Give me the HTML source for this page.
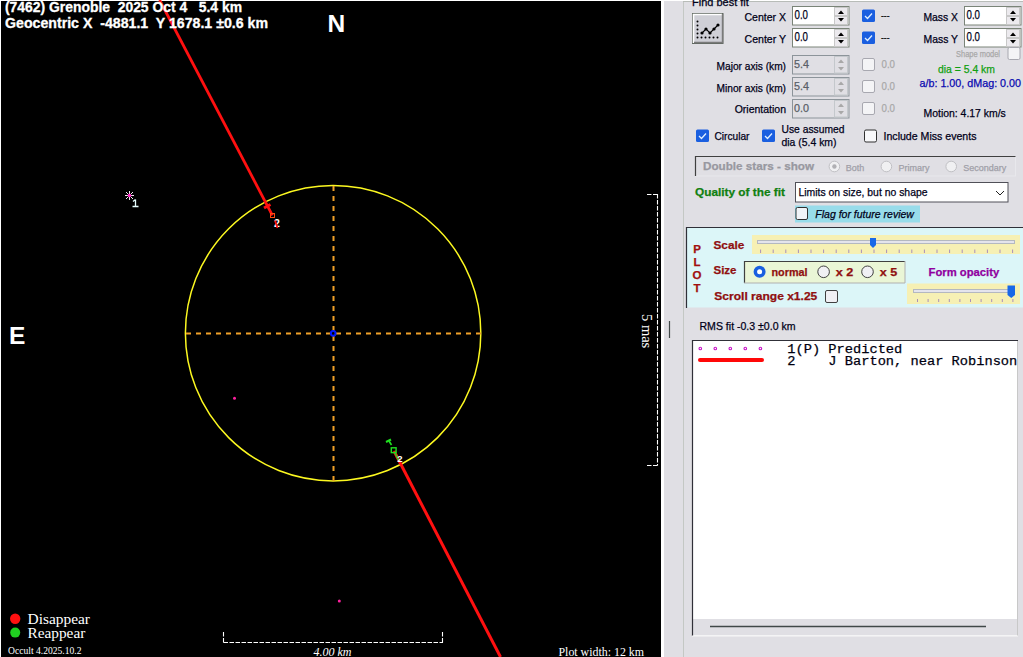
<!DOCTYPE html>
<html><head><meta charset="utf-8">
<style>
html,body{margin:0;padding:0;background:#fff;overflow:hidden}
svg{display:block}
text{font-family:"Liberation Sans",sans-serif;white-space:pre}
#panel text{stroke-width:0.25px}
text.sf,.sf text{font-family:"Liberation Serif",serif}
text.mono,.mono text{font-family:"Liberation Mono",monospace}
</style></head><body>
<svg width="1023" height="657" viewBox="0 0 1023 657">
<!-- ================= PLOT ================= -->
<rect x="0" y="0" width="1023" height="657" fill="#fff"/>
<rect x="1" y="1" width="660" height="656" fill="#000"/>
<g id="plot">
  <!-- header -->
  <text x="327.5" y="32" font-size="24.5" font-weight="bold" fill="#fff">N</text>
  <text x="9" y="344" font-size="24.5" font-weight="bold" fill="#fff">E</text>

  <!-- circle -->
  <circle cx="333.1" cy="333.2" r="147.7" fill="none" stroke="#fcf820" stroke-width="1.5"/>
  <!-- crosshair -->
  <line x1="186" y1="333.5" x2="481" y2="333.5" stroke="#f0a028" stroke-width="2" stroke-dasharray="5 5"/>
  <line x1="333.5" y1="186" x2="333.5" y2="481" stroke="#f0a028" stroke-width="2" stroke-dasharray="5 5"/>
  <circle cx="333.2" cy="333.4" r="2.3" fill="none" stroke="#0018ff" stroke-width="2"/>

  <!-- chord line -->
  <line x1="159.6" y1="0" x2="272.4" y2="215.3" stroke="#ff1010" stroke-width="2.8"/>
  <line x1="264" y1="208" x2="270.5" y2="204.5" stroke="#ff1010" stroke-width="3"/>
  <rect x="270.5" y="213.5" width="4" height="4" fill="none" stroke="#ff4a10" stroke-width="1"/>
  <text x="274" y="227" font-size="10.5" font-weight="bold" fill="#fff">2</text>
  <line x1="275" y1="220.5" x2="277.5" y2="228" stroke="#ff1010" stroke-width="1.8"/>

  <line x1="394" y1="451" x2="500.5" y2="657" stroke="#ff1010" stroke-width="3"/>
  <rect x="391.3" y="447.8" width="4.8" height="4.8" fill="none" stroke="#20e020" stroke-width="1.4"/>
  <line x1="386" y1="442" x2="391" y2="439.5" stroke="#20e020" stroke-width="2"/>
  <line x1="389" y1="441" x2="391.5" y2="445" stroke="#20e020" stroke-width="1.6"/>
  <line x1="395" y1="453" x2="399" y2="461" stroke="#20e020" stroke-width="1.5"/>
  <text x="397.3" y="461.8" font-size="9.5" font-weight="bold" fill="#fff">2</text>

  <!-- star 1 -->
  <g stroke="#f0e8f0" stroke-width="1">
    <line x1="125" y1="195.5" x2="134" y2="195.5"/>
    <line x1="129.5" y1="191" x2="129.5" y2="200"/>
    <line x1="126" y1="192" x2="133" y2="199"/>
    <line x1="133" y1="192" x2="126" y2="199"/>
  </g>
  <circle cx="129.5" cy="195.5" r="1.8" fill="#ff20c0"/>
  <path d="M135.5 199.5 V206.5 M132.5 206.5 H138.5 M133 201.5 L135.5 199.5" stroke="#e8ffff" stroke-width="1.3" fill="none"/>

  <!-- magenta dots -->
  <circle cx="234.5" cy="398.3" r="1.5" fill="#ff20a0"/>
  <circle cx="339.3" cy="601" r="1.5" fill="#ff20a0"/>

  <!-- 5 mas bar -->
  <g stroke="#fff" stroke-width="1.1" fill="none">
    <line x1="657.5" y1="194" x2="657.5" y2="465.5" stroke-dasharray="4.5 1.5"/>
    <line x1="647" y1="194.5" x2="658" y2="194.5" stroke-dasharray="4.5 1.5"/>
    <line x1="647" y1="465.5" x2="658" y2="465.5" stroke-dasharray="4.5 1.5"/>
  </g>
  <text transform="translate(641.5,314) rotate(90)" font-size="14.5" class="sf" fill="#fff">5 mas</text>

  <!-- scale bar -->
  <g stroke="#fff" stroke-width="1.1" fill="none">
    <line x1="223.5" y1="642.5" x2="443" y2="642.5" stroke-dasharray="4.5 1.5"/>
    <line x1="223.5" y1="632" x2="223.5" y2="643" stroke-dasharray="4.5 1.5"/>
    <line x1="442.5" y1="632" x2="442.5" y2="643" stroke-dasharray="4.5 1.5"/>
  </g>
  <text x="313.5" y="655.5" font-size="12" font-style="italic" class="sf" fill="#fff">4.00 km</text>
  <text x="558.5" y="655.5" font-size="12" class="sf" fill="#fff" textLength="85.5" lengthAdjust="spacingAndGlyphs">Plot width: 12 km</text>

  <!-- legend -->
  <circle cx="15.2" cy="618.8" r="5.2" fill="#ff1010"/>
  <circle cx="15.2" cy="632.6" r="5" fill="#20d020"/>
  <text x="27.5" y="623.5" font-size="15" class="sf" fill="#fff" textLength="62.5" lengthAdjust="spacingAndGlyphs">Disappear</text>
  <text x="27.5" y="637.5" font-size="15" class="sf" fill="#fff" textLength="57.8" lengthAdjust="spacingAndGlyphs">Reappear</text>
  <text x="8" y="653.5" font-size="9.8" class="sf" fill="#fff" textLength="73.5" lengthAdjust="spacingAndGlyphs">Occult 4.2025.10.2</text>
  <text x="5" y="12" font-size="14" font-weight="bold" fill="#fff" stroke="#fff" stroke-width="0.3" textLength="237" lengthAdjust="spacingAndGlyphs">(7462) Grenoble  2025 Oct 4   5.4 km</text>
  <text x="5" y="28" font-size="14" font-weight="bold" fill="#fff" stroke="#fff" stroke-width="0.3" textLength="263" lengthAdjust="spacingAndGlyphs">Geocentric X  -4881.1  Y 1678.1 ±0.6 km</text>
</g>

<!-- ================= PANEL ================= -->
<rect x="664" y="1" width="359" height="656" fill="#e0dfe4"/>
<g id="panel">
  <!-- group lines -->
  <line x1="683.5" y1="1" x2="683.5" y2="657" stroke="#c4c8c4" stroke-width="1"/>
  <line x1="683" y1="1.5" x2="1023" y2="1.5" stroke="#b8bcb8" stroke-width="1"/>
  <text x="692" y="5.5" font-size="11" fill="#000018" stroke="#000018">Find best fit</text>

  <!-- find best fit button -->
  <rect x="692.5" y="13.5" width="30.5" height="30" fill="#cfcfd6" stroke="#606860" stroke-width="1"/>
  <path d="M693.5 43 V14.5 H722" stroke="#fff" stroke-width="1.6" fill="none"/>
  <path d="M694 42.5 H722.5 V14" stroke="#7a7a7a" stroke-width="1.4" fill="none"/>
  <g fill="#000">
    <circle cx="697.5" cy="21.5" r="1"/><circle cx="697.5" cy="25.5" r="1"/><circle cx="697.5" cy="29.5" r="1"/><circle cx="697.5" cy="33.5" r="1"/><circle cx="697.5" cy="37.5" r="1"/>
    <circle cx="701.5" cy="37.5" r="1"/><circle cx="705.5" cy="37.5" r="1"/><circle cx="709.5" cy="37.5" r="1"/><circle cx="713.5" cy="37.5" r="1"/><circle cx="717.5" cy="37.5" r="1"/>
    <circle cx="702" cy="33" r="1.6"/><circle cx="706" cy="29" r="1.6"/><circle cx="710" cy="33" r="1.6"/><circle cx="714" cy="29" r="1.6"/><circle cx="718" cy="25" r="1.6"/>
  </g>
  <polyline points="702,33 706,29 710,33 714,29 718,25" stroke="#000" stroke-width="1.1" fill="none"/>

  <!-- labels -->
  <g font-size="11" fill="#000018" stroke="#000018" text-anchor="end">
    <text x="786" y="21" textLength="41.5" lengthAdjust="spacingAndGlyphs">Center X</text>
    <text x="786" y="42.5" textLength="41.5" lengthAdjust="spacingAndGlyphs">Center Y</text>
    <text x="786" y="70" textLength="69.5" lengthAdjust="spacingAndGlyphs">Major axis (km)</text>
    <text x="786" y="91.5" textLength="69.5" lengthAdjust="spacingAndGlyphs">Minor axis (km)</text>
    <text x="786" y="112.5" textLength="51.3" lengthAdjust="spacingAndGlyphs">Orientation</text>
    <text x="958" y="21" textLength="34.5" lengthAdjust="spacingAndGlyphs">Mass X</text>
    <text x="958" y="42.5" textLength="34.5" lengthAdjust="spacingAndGlyphs">Mass Y</text>
  </g>

  <!-- spin boxes -->
  <g id="spins">
    <rect x="792.5" y="6.5" width="56.5" height="18.5" fill="#fff" stroke="#7a8478"/>
    <rect x="792.5" y="28.5" width="56.5" height="18.5" fill="#fff" stroke="#7a8478"/>
    <rect x="964.5" y="6.5" width="56.5" height="18.5" fill="#fff" stroke="#7a8478"/>
    <rect x="964.5" y="28.5" width="56.5" height="18.5" fill="#fff" stroke="#7a8478"/>
    <rect x="792.5" y="55.5" width="56.5" height="18.5" fill="none" stroke="#8c949a"/>
    <rect x="792.5" y="77.5" width="56.5" height="18.5" fill="none" stroke="#8c949a"/>
    <rect x="792.5" y="99.5" width="56.5" height="18.5" fill="none" stroke="#8c949a"/>
    <g fill="none" stroke="#c4c8cc"><rect x="834.5" y="56.5" width="13" height="16.5"/><rect x="834.5" y="78.5" width="13" height="16.5"/><rect x="834.5" y="100.5" width="13" height="16.5"/></g>
  </g>
  <g font-size="11" fill="#000018" stroke="#000018">
    <text x="794.5" y="19.3" font-size="12.5" textLength="13.5" lengthAdjust="spacingAndGlyphs">0.0</text>
    <text x="794.5" y="41.3" font-size="12.5" textLength="13.5" lengthAdjust="spacingAndGlyphs">0.0</text>
    <text x="966.5" y="19.3" font-size="12.5" textLength="13.5" lengthAdjust="spacingAndGlyphs">0.0</text>
    <text x="966.5" y="41.3" font-size="12.5" textLength="13.5" lengthAdjust="spacingAndGlyphs">0.0</text>
  </g>
  <g font-size="11" fill="#5a6068" stroke="#5a6068">
    <text x="794" y="68" textLength="15" lengthAdjust="spacingAndGlyphs">5.4</text>
    <text x="794" y="90" textLength="15" lengthAdjust="spacingAndGlyphs">5.4</text>
    <text x="794" y="112" textLength="15" lengthAdjust="spacingAndGlyphs">0.0</text>
  </g>
  <!-- spin buttons -->
  <g id="spinbtns" fill="#eceaee" stroke="#c8c8c8" stroke-width="1">
    <rect x="834.5" y="7.5" width="13" height="8"/><rect x="834.5" y="16.5" width="13" height="8"/>
    <rect x="834.5" y="29.5" width="13" height="8"/><rect x="834.5" y="38.5" width="13" height="8"/>
    <rect x="1006.5" y="7.5" width="13" height="8"/><rect x="1006.5" y="16.5" width="13" height="8"/>
    <rect x="1006.5" y="29.5" width="13" height="8"/><rect x="1006.5" y="38.5" width="13" height="8"/>
  </g>
  <g fill="#000">
    <path d="M838 14 L841 10.5 L844 14 Z"/><path d="M838 18 L841 21.5 L844 18 Z"/>
    <path d="M838 36 L841 32.5 L844 36 Z"/><path d="M838 40 L841 43.5 L844 40 Z"/>
    <path d="M1010 14 L1013 10.5 L1016 14 Z"/><path d="M1010 18 L1013 21.5 L1016 18 Z"/>
    <path d="M1010 36 L1013 32.5 L1016 36 Z"/><path d="M1010 40 L1013 43.5 L1016 40 Z"/>
  </g>
  <g fill="#a8a8a8">
    <path d="M838 63 L841 59.5 L844 63 Z"/><path d="M838 67 L841 70.5 L844 67 Z"/>
    <path d="M838 85 L841 81.5 L844 85 Z"/><path d="M838 89 L841 92.5 L844 89 Z"/>
    <path d="M838 107 L841 103.5 L844 107 Z"/><path d="M838 111 L841 114.5 L844 111 Z"/>
  </g>

  <!-- checked checkboxes -->
  <g id="chk">
    <rect x="862" y="9.5" width="13" height="12.5" rx="1.5" fill="#1a5fe0"/>
    <rect x="862" y="31.5" width="13" height="12.5" rx="1.5" fill="#1a5fe0"/>
    <rect x="696" y="129.5" width="13" height="12.5" rx="1.5" fill="#1a5fe0"/>
    <rect x="762" y="129.5" width="13" height="12.5" rx="1.5" fill="#1a5fe0"/>
  </g>
  <g stroke="#e0f0ff" stroke-width="1.3" fill="none">
    <path d="M865 16 L867.5 18.5 L872 13.5"/>
    <path d="M865 38 L867.5 40.5 L872 35.5"/>
    <path d="M699 136 L701.5 138.5 L706 133.5"/>
    <path d="M765 136 L767.5 138.5 L772 133.5"/>
  </g>
  <g font-size="11" fill="#101010" stroke="#101010">
    <text x="881" y="19" textLength="8.5" lengthAdjust="spacingAndGlyphs">---</text>
    <text x="881" y="41" textLength="8.5" lengthAdjust="spacingAndGlyphs">---</text>
  </g>
  <!-- disabled checkboxes -->
  <g fill="#f4f4f6" stroke="#a8a8b0">
    <rect x="862.5" y="58.5" width="12" height="12" rx="1.5"/>
    <rect x="862.5" y="80.5" width="12" height="12" rx="1.5"/>
    <rect x="862.5" y="102.5" width="12" height="12" rx="1.5"/>
    <rect x="1008" y="47.5" width="12" height="12" rx="1.5"/>
  </g>
  <g font-size="11" fill="#a8a8a8" stroke="#a8a8a8">
    <text x="881.5" y="68" textLength="13.5" lengthAdjust="spacingAndGlyphs">0.0</text>
    <text x="881.5" y="90" textLength="13.5" lengthAdjust="spacingAndGlyphs">0.0</text>
    <text x="881.5" y="112" textLength="13.5" lengthAdjust="spacingAndGlyphs">0.0</text>
  </g>
  <text x="956" y="56.5" font-size="9" fill="#a8a8a8" stroke="#a8a8a8" textLength="44" lengthAdjust="spacingAndGlyphs">Shape model</text>

  <text x="938" y="72.5" font-size="11" fill="#10a010" stroke="#10a010" textLength="57" lengthAdjust="spacingAndGlyphs">dia = 5.4 km</text>
  <text x="919.5" y="86.5" font-size="11" fill="#0808b0" stroke="#0808b0" textLength="101.5" lengthAdjust="spacingAndGlyphs">a/b: 1.00, dMag: 0.00</text>
  <text x="923.5" y="116.5" font-size="11" fill="#000018" stroke="#000018" textLength="82.3" lengthAdjust="spacingAndGlyphs">Motion: 4.17 km/s</text>

  <text x="714.5" y="139.5" font-size="11" fill="#000018" stroke="#000018" textLength="35" lengthAdjust="spacingAndGlyphs">Circular</text>
  <text x="781.5" y="133" font-size="11" fill="#000018" stroke="#000018" textLength="63" lengthAdjust="spacingAndGlyphs">Use assumed</text>
  <text x="781.5" y="145.5" font-size="11" fill="#000018" stroke="#000018" textLength="55" lengthAdjust="spacingAndGlyphs">dia (5.4 km)</text>
  <rect x="864.5" y="130" width="12" height="12" rx="1.5" fill="#f8f8fa" stroke="#303030"/>
  <text x="883.5" y="139.5" font-size="11" fill="#000018" stroke="#000018" textLength="93" lengthAdjust="spacingAndGlyphs">Include Miss events</text>

  <!-- Double stars frame -->
  <rect x="695.5" y="156.5" width="320" height="19.5" fill="none" stroke="#e8e8ec"/>
  <path d="M695.5 176 V156.5 H1015.5" stroke="#404040" stroke-width="1.2" fill="none"/>
  <text x="703" y="169.5" font-size="11" font-weight="bold" fill="#9898a0" stroke="#9898a0" textLength="111" lengthAdjust="spacingAndGlyphs">Double stars - show</text>
  <g fill="#f0f0f2" stroke="#c0c0c4">
    <circle cx="834.4" cy="166.5" r="5.3"/>
    <circle cx="886.4" cy="166.5" r="5.3"/>
    <circle cx="951.2" cy="166.5" r="5.3"/>
  </g>
  <circle cx="834.4" cy="166.5" r="2.2" fill="#b0b0b4"/>
  <g font-size="9" fill="#a0a0a8" stroke="#a0a0a8">
    <text x="845.8" y="170.5">Both</text>
    <text x="898.4" y="170.5">Primary</text>
    <text x="963.3" y="170.5">Secondary</text>
  </g>

  <!-- quality -->
  <text x="695" y="196" font-size="11" font-weight="bold" fill="#108010" stroke="#108010" textLength="90" lengthAdjust="spacingAndGlyphs">Quality of the fit</text>
  <rect x="795.5" y="182.5" width="212.5" height="19.5" fill="#fff" stroke="#505058"/>
  <text x="798.5" y="196" font-size="11" fill="#000018" stroke="#000018" textLength="129" lengthAdjust="spacingAndGlyphs">Limits on size, but no shape</text>
  <path d="M996 191 L1000 195 L1004 191" stroke="#202020" stroke-width="1" fill="none"/>
  <rect x="795" y="205.5" width="125" height="17" fill="#98dcea"/>
  <rect x="796" y="207.5" width="11.5" height="12" rx="1.5" fill="#f0f4f8" stroke="#303030"/>
  <text x="815.3" y="217.5" font-size="11" font-style="italic" fill="#000018" stroke="#000018" textLength="98.6" lengthAdjust="spacingAndGlyphs">Flag for future review</text>

  <!-- PLOT frame -->
  <rect x="686" y="227" width="337" height="80.5" fill="#dcf6f8"/>
  <path d="M686.5 308 V227.5 H1023" stroke="#303038" stroke-width="1.2" fill="none"/>
  <g font-size="11.5" font-weight="bold" fill="#a01010" stroke="#a01010" text-anchor="middle">
    <text x="697" y="252.5">P</text>
    <text x="697" y="266">L</text>
    <text x="697" y="279">O</text>
    <text x="697" y="291.5">T</text>
  </g>
  <g font-size="11" font-weight="bold" fill="#901010" stroke="#901010">
    <text x="713.5" y="248.5" textLength="30.8" lengthAdjust="spacingAndGlyphs">Scale</text>
    <text x="713.5" y="274" textLength="23" lengthAdjust="spacingAndGlyphs">Size</text>
    <text x="714.3" y="300" textLength="103" lengthAdjust="spacingAndGlyphs">Scroll range x1.25</text>
  </g>
  <!-- scale slider -->
  <rect x="752" y="235" width="268" height="19" fill="#f6f0b4"/>
  <rect x="757.5" y="240.5" width="257" height="3" fill="#e4e4ec" stroke="#b4b8c0" stroke-width="1"/>
  <path d="M870 238 H876 V245 L873 248 L870 245 Z" fill="#1868e8"/>
  <g stroke="#a890b8" stroke-width="1"><line x1="760.6" y1="249.5" x2="760.6" y2="253"/><line x1="773.2" y1="249.5" x2="773.2" y2="253"/><line x1="785.8" y1="249.5" x2="785.8" y2="253"/><line x1="798.4" y1="249.5" x2="798.4" y2="253"/><line x1="811.0" y1="249.5" x2="811.0" y2="253"/><line x1="823.6" y1="249.5" x2="823.6" y2="253"/><line x1="836.2" y1="249.5" x2="836.2" y2="253"/><line x1="848.8" y1="249.5" x2="848.8" y2="253"/><line x1="861.4" y1="249.5" x2="861.4" y2="253"/><line x1="874.0" y1="249.5" x2="874.0" y2="253"/><line x1="886.6" y1="249.5" x2="886.6" y2="253"/><line x1="899.2" y1="249.5" x2="899.2" y2="253"/><line x1="911.8" y1="249.5" x2="911.8" y2="253"/><line x1="924.4" y1="249.5" x2="924.4" y2="253"/><line x1="937.0" y1="249.5" x2="937.0" y2="253"/><line x1="949.6" y1="249.5" x2="949.6" y2="253"/><line x1="962.2" y1="249.5" x2="962.2" y2="253"/><line x1="974.8" y1="249.5" x2="974.8" y2="253"/><line x1="987.4" y1="249.5" x2="987.4" y2="253"/><line x1="1000.0" y1="249.5" x2="1000.0" y2="253"/><line x1="1012.6" y1="249.5" x2="1012.6" y2="253"/></g>
  <!-- size group -->
  <rect x="744" y="261" width="161" height="22" fill="#eaf6d6"/>
  <path d="M744.5 283 V261.5 H905" stroke="#404040" stroke-width="1.2" fill="none"/>
  <path d="M905 261 V283 H744" stroke="#b0b0b0" stroke-width="1" fill="none"/>
  <circle cx="759.6" cy="271.8" r="6" fill="#1a5fe0"/>
  <circle cx="759.6" cy="271.8" r="2.5" fill="#fff"/>
  <circle cx="823.6" cy="271.8" r="5.8" fill="#f0f0f4" stroke="#404040"/>
  <circle cx="867.5" cy="271.8" r="5.8" fill="#f0f0f4" stroke="#404040"/>
  <g font-size="11" font-weight="bold" fill="#901010" stroke="#901010">
    <text x="771.5" y="276" textLength="36" lengthAdjust="spacingAndGlyphs">normal</text>
    <text x="835.7" y="276" textLength="17.6" lengthAdjust="spacingAndGlyphs">x 2</text>
    <text x="879.7" y="276" textLength="17.5" lengthAdjust="spacingAndGlyphs">x 5</text>
  </g>
  <text x="928.5" y="275.5" font-size="11" font-weight="bold" fill="#9000a0" stroke="#9000a0" textLength="70.7" lengthAdjust="spacingAndGlyphs">Form opacity</text>
  <rect x="825.5" y="290.5" width="12" height="12" rx="1.5" fill="#f0f0f4" stroke="#404040"/>
  <!-- opacity slider -->
  <rect x="907" y="283.5" width="113" height="20.5" fill="#f6f0b4"/>
  <rect x="913.5" y="289.5" width="101" height="3" fill="#e4e4ec" stroke="#b4b8c0" stroke-width="1"/>
  <path d="M1007.5 285.5 H1015 V295 L1011.25 298 L1007.5 295 Z" fill="#1868e8"/>
  <g stroke="#a890b8" stroke-width="1"><line x1="917.5" y1="299" x2="917.5" y2="302"/><line x1="928.1" y1="299" x2="928.1" y2="302"/><line x1="938.7" y1="299" x2="938.7" y2="302"/><line x1="949.3" y1="299" x2="949.3" y2="302"/><line x1="959.9" y1="299" x2="959.9" y2="302"/><line x1="970.5" y1="299" x2="970.5" y2="302"/><line x1="981.1" y1="299" x2="981.1" y2="302"/><line x1="991.7" y1="299" x2="991.7" y2="302"/><line x1="1002.3" y1="299" x2="1002.3" y2="302"/><line x1="1012.9" y1="299" x2="1012.9" y2="302"/></g>
  <line x1="669.5" y1="321" x2="669.5" y2="338" stroke="#404848" stroke-width="1.2"/>

  <!-- RMS -->
  <text x="699.5" y="329.5" font-size="11" fill="#000018" stroke="#000018" textLength="96" lengthAdjust="spacingAndGlyphs">RMS fit -0.3 ±0.0 km</text>

  <!-- list -->
  <rect x="692" y="340" width="326" height="296" fill="#fff"/>
  <rect x="693" y="619" width="324" height="16.5" fill="#e0dfe4"/>
  <path d="M692.5 636 V340.5 H1018" stroke="#303038" stroke-width="1.2" fill="none"/>
  <line x1="1017.5" y1="341" x2="1017.5" y2="636" stroke="#c8c8c8"/>
  <line x1="692" y1="636" x2="1018" y2="636" stroke="#f8f8f8"/>
  <line x1="710" y1="626.5" x2="986" y2="626.5" stroke="#404848" stroke-width="1.6"/>
  <g fill="none" stroke="#c818c8" stroke-width="1.1">
    <circle cx="700.3" cy="348.5" r="1.3"/><circle cx="715.3" cy="348.5" r="1.3"/><circle cx="730.3" cy="348.5" r="1.3"/><circle cx="745.3" cy="348.5" r="1.3"/><circle cx="760.4" cy="348.5" r="1.3"/>
  </g>
  <line x1="700" y1="360" x2="762" y2="360" stroke="#ff0808" stroke-width="4" stroke-linecap="round"/>
  <g font-size="13.7" class="mono" fill="#000010" stroke="#000010" style="stroke-width:0.1px">
    <text x="787.3" y="353">1(P) Predicted</text>
    <text x="787.3" y="365">2    J Barton, near Robinson</text>
  </g>
</g>
</svg>
</body></html>
